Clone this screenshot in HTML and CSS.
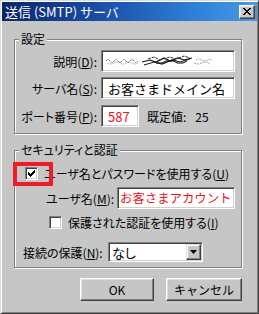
FILE: index.html
```html
<!DOCTYPE html>
<html lang="ja">
<head>
<meta charset="utf-8">
<title>送信 (SMTP) サーバ</title>
<link rel="stylesheet" href="styles.css">
</head>
<body>
<div class="window">
  <div class="titlebar">
    <span class="title">送信 (SMTP) サーバ</span>
    <span class="close"><svg width="8" height="7" viewBox="0 0 8 7"><path d="M0 0h2v1h1v1h2V1h1V0h2v1H7v1H6v1H5v1h1v1h1v1h1v1H6V6H5V5H3v1H2v1H0V6h1V5h1V4h1V3H2V2H1V1H0z" fill="#000"/></svg></span>
  </div>
  <div class="body">
    <fieldset class="group g1">
      <legend>設定</legend>
      <div class="rows">
        <div class="row">
          <label class="lbl">説明(<u>D</u>):</label>
          <div class="field wide scribble">
            <svg width="110" height="14" viewBox="0 0 110 14">
              <path d="M2 7q2-3 4 0t4 0 4 0 4 0 4 0 4 0 4 0 4 0" fill="none" stroke="#666" stroke-width="1" stroke-dasharray="2 1"/>
              <path d="M4 9q3 2 6 0t6 0 6 0 6 0 6 0" fill="none" stroke="#888" stroke-width="1" stroke-dasharray="1 1"/>
              <path d="M38 8l8-2 6 2 8-4 6 3 8-3 6 2 8-2" fill="none" stroke="#111" stroke-width="1.2"/>
              <path d="M40 11l10-3 8 2 10-4 8 2 10-3" fill="none" stroke="#222" stroke-width="1.2"/>
              <path d="M44 5l6-2 6 3 10-3 6 2 8-3 6 2" fill="none" stroke="#333" stroke-width="1" stroke-dasharray="3 1"/>
              <path d="M52 9h6l4-2h8l3 2h6l4-2" fill="none" stroke="#000" stroke-width="1"/>
              <path d="M92 6q3-2 6 0t6 0 4 1" fill="none" stroke="#777" stroke-width="1" stroke-dasharray="1 1"/>
              <path d="M90 9q4 2 8 0t8 1" fill="none" stroke="#999" stroke-width="1" stroke-dasharray="2 1"/>
            </svg>
          </div>
        </div>
        <div class="row">
          <label class="lbl">サーバ名(<u>S</u>):</label>
          <div class="field wide">お客さまドメイン名</div>
        </div>
        <div class="row row-port">
          <label class="lbl">ポート番号(<u>P</u>):</label>
          <div class="field port red">587</div>
          <span class="def">既定値:</span>
          <span class="defv">25</span>
        </div>
      </div>
    </fieldset>

    <fieldset class="group g2">
      <legend>セキュリティと認証</legend>
      <div class="rows2">
        <div class="crow r-auth">
          <span class="check"><svg width="9" height="9" viewBox="0 0 9 9" shape-rendering="crispEdges"><path d="M1 3H2V4H3V5H4V4H5V3H6V2H7V1H8V4H7V5H6V6H5V7H4V8H3V7H2V6H1Z" fill="#000"/></svg></span>
          <span class="clabel">ユーザ名とパスワードを使用する(<u>U</u>)</span>
          <span class="mark"></span>
        </div>
        <div class="r-user">
          <label class="ulbl">ユーザ名(<u>M</u>):</label>
          <div class="field user red">お客さまアカウント</div>
        </div>
        <div class="crow r-secure">
          <span class="check"></span>
          <span class="clabel">保護された認証を使用する(<u>I</u>)</span>
        </div>
        <div class="r-conn">
          <label class="clbl">接続の保護(<u>N</u>):</label>
          <div class="combo">
            <span class="combo-text">なし</span>
            <span class="combo-btn"><svg width="7" height="4" viewBox="0 0 7 4"><path d="M0 0h7L3.5 4z" fill="#000"/></svg></span>
          </div>
        </div>
      </div>
    </fieldset>

    <div class="buttons">
      <button class="btn ok">OK</button>
      <button class="btn cancel">キャンセル</button>
    </div>
  </div>
</div>
</body>
</html>
```

FILE: styles.css
```css
* { box-sizing: border-box; }
html, body { margin: 0; padding: 0; }
body {
  background: #c6c6c6;
  font-family: "Noto Sans CJK JP", "Noto Sans", sans-serif;
  font-size: 12px;
  color: #000;
  font-feature-settings: "palt";
}
u { text-decoration: underline; text-underline-offset: 1px; }

.window {
  width: 259px;
  height: 314px;
  background: #c6c6c6;
  border: 1px solid;
  border-color: #dcdcdc #404040 #404040 #dcdcdc;
  box-shadow: inset 1px 1px 0 #fff, inset -1px -1px 0 #808080;
  padding: 1px;
  display: flex;
  flex-direction: column;
}

.titlebar {
  height: 19px;
  flex: none;
  background: linear-gradient(to right, #0a246a 0%, #1d56b0 45%, #3286da 80%, #4a98e6 100%);
  display: flex;
  align-items: center;
  justify-content: space-between;
  padding: 0 2px 0 3px;
}
.title {
  color: #fff;
  font-size: 13px;
  line-height: 15px;
  font-feature-settings: normal;
}
.close {
  width: 16px;
  height: 14px;
  background: #c6c6c6;
  border: 1px solid;
  border-color: #fff #404040 #404040 #fff;
  box-shadow: inset -1px -1px 0 #808080, inset 1px 1px 0 #dfdfdf;
  display: flex;
  align-items: center;
  justify-content: center;
}

.body {
  padding: 11px 15px 0 12px;
  display: flex;
  flex-direction: column;
}

.group {
  margin: 0;
  padding: 0;
  min-width: 0;
  border: 1px solid #808080;
  box-shadow: inset 1px 1px 0 #fff, 1px 1px 0 #fff;
}
.group legend {
  margin-left: 4px;
  padding: 0 2px;
  line-height: 14px;
  font-size: 12px;
  background: #c6c6c6;
}

.rows {
  display: flex;
  flex-direction: column;
  gap: 5px;
  padding: 4px 6px 6px 0;
}
.row {
  display: flex;
  align-items: center;
  height: 22px;
}
.row-port { margin-top: 1px; }
.lbl {
  width: 82px;
  text-align: right;
  margin-right: 4px;
  white-space: nowrap;
}

.field {
  height: 22px;
  background: #fff;
  border: 1px solid;
  border-color: #808080 #fff #fff #808080;
  box-shadow: inset 1px 1px 0 #404040, inset -1px -1px 0 #d4d0c8;
  padding: 0 0 0 6px;
  display: flex;
  align-items: center;
  font-size: 13px;
  font-feature-settings: normal;
  white-space: nowrap;
  overflow: hidden;
}
.wide { width: 134px; }
.scribble { padding-left: 2px; }
.port { width: 38px; }
.red { color: #e8141c; }
.def { margin-left: 8px; }
.defv { margin-left: 9px; }

.g2 { margin-top: 9px; }
.rows2 {
  display: flex;
  flex-direction: column;
  padding: 10px 6px 5px 0;
}
.crow {
  display: flex;
  align-items: center;
  height: 13px;
  gap: 6px;
  white-space: nowrap;
}
.r-auth { padding-left: 10px; position: relative; }
.mark {
  position: absolute;
  left: -2px;
  top: -5px;
  width: 40px;
  height: 24px;
  border: 4px solid #ee1c24;
}
.check {
  width: 13px;
  height: 13px;
  flex: none;
  background: #fff;
  border: 1px solid;
  border-color: #808080 #fff #fff #808080;
  box-shadow: inset 1px 1px 0 #404040, inset -1px -1px 0 #d4d0c8;
  display: flex;
  align-items: center;
  justify-content: center;
}
.clabel { line-height: 14px; }

.r-user {
  margin-top: 7px;
  padding-left: 31px;
  display: flex;
  align-items: center;
}
.ulbl { flex: 1; white-space: nowrap; }
.user { width: 118px; padding-left: 2px; font-size: 12.4px; }

.r-secure { margin-top: 7px; padding-left: 34px; }

.r-conn {
  margin-top: 13px;
  padding-left: 8px;
  display: flex;
  align-items: center;
}
.clbl { width: 85px; white-space: nowrap; }
.combo {
  width: 95px;
  height: 20px;
  background: #fff;
  border: 1px solid;
  border-color: #808080 #fff #fff #808080;
  box-shadow: inset 1px 1px 0 #404040, inset -1px -1px 0 #d4d0c8;
  display: flex;
  align-items: center;
  padding: 1px;
}
.combo-text {
  flex: 1;
  padding-left: 2px;
  font-size: 13px;
  line-height: 15px;
}
.combo-btn {
  width: 15px;
  height: 16px;
  background: #c6c6c6;
  border: 1px solid;
  border-color: #dfdfdf #404040 #404040 #dfdfdf;
  box-shadow: inset -1px -1px 0 #808080, inset 1px 1px 0 #fff;
  display: flex;
  align-items: center;
  justify-content: center;
}

.buttons {
  margin-top: 10px;
  display: flex;
  justify-content: flex-end;
  gap: 12px;
}
.btn {
  height: 23px;
  font-family: inherit;
  font-size: 12px;
  color: #000;
  background: #c6c6c6;
  border: 1px solid;
  border-color: #fff #404040 #404040 #fff;
  box-shadow: inset -1px -1px 0 #808080, inset 1px 1px 0 #dfdfdf;
  padding: 0;
  display: flex;
  align-items: center;
  justify-content: center;
}
.ok { width: 74px; }
.cancel { width: 76px; }
```
